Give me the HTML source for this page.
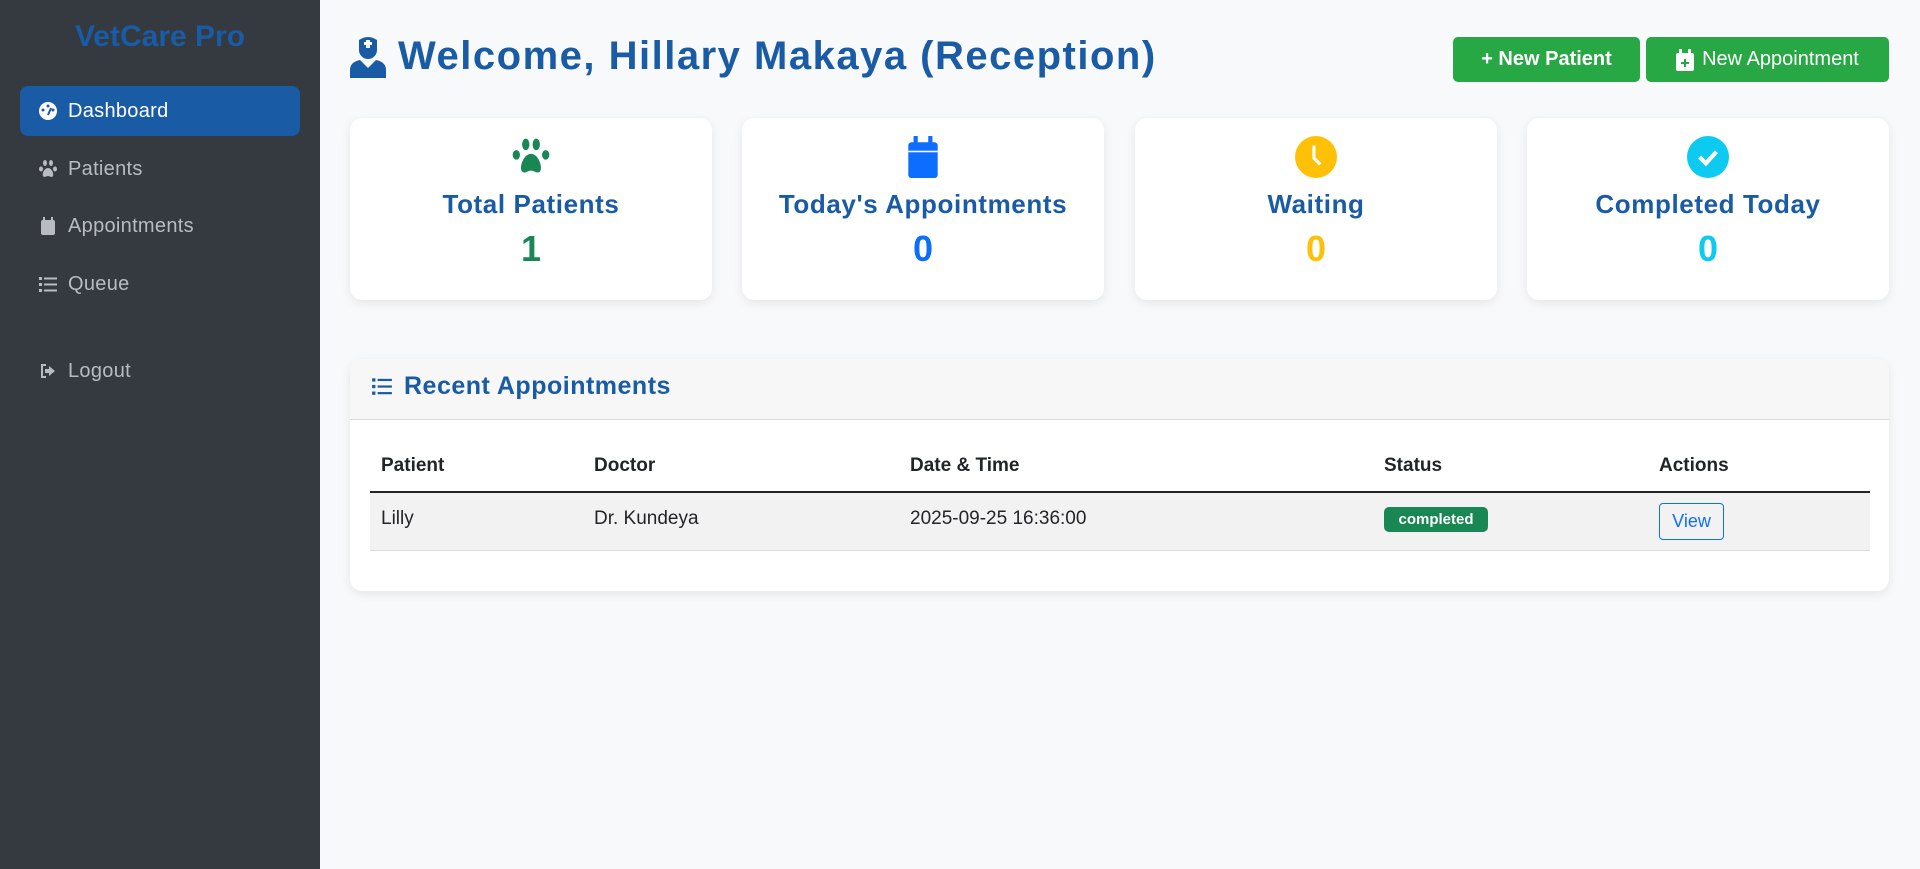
<!DOCTYPE html>
<html><head><meta charset="utf-8"><style>
*{box-sizing:border-box;margin:0;padding:0}
body{width:1920px;height:869px;background:#f8f9fa;font-family:"Liberation Sans",sans-serif;position:relative;overflow:hidden}
.sb{position:absolute;left:0;top:0;width:320px;height:869px;background:#343a40}
.logo{position:absolute;top:20px;width:320px;text-align:center;color:#1a5ba6;font-weight:bold;font-size:30px}
.nav{position:absolute;left:20px;width:280px;height:50px;border-radius:8px;color:#b8bcc0;font-size:20px;display:flex;align-items:center;padding-left:18px;gap:10px;letter-spacing:.3px}
.nav.act{background:#1a5ba6;color:#fff}
.nav svg{width:20px;height:20px;fill:currentColor}
h1{position:absolute;left:350px;top:34px;font-size:40px;color:#1a5ba6;display:flex;align-items:center;gap:12px;letter-spacing:1.5px}
.btn{position:absolute;top:37px;height:45px;background:#28a745;color:#fff;border-radius:5px;font-size:20px;display:flex;align-items:center;justify-content:center;gap:8px}
.card{position:absolute;top:118px;width:362px;height:182px;background:#fff;border-radius:12px;box-shadow:0 3px 10px rgba(0,0,0,.08);text-align:center}
.card svg{position:absolute;left:160px;top:18px;width:42px;height:42px}
.card .t{position:absolute;top:71px;width:100%;font-size:26px;font-weight:bold;color:#1a5ba6;letter-spacing:.6px}
.card .n{position:absolute;top:110px;width:100%;font-size:36px;font-weight:bold}
.panel{position:absolute;left:350px;top:359px;width:1539px;height:232px;background:#fff;border-radius:12px;box-shadow:0 3px 10px rgba(0,0,0,.08);overflow:hidden}
.ph{height:61px;background:#f7f7f7;border-bottom:1px solid #dcdcdc;display:flex;align-items:center;padding-left:20px;gap:10px;font-size:25px;font-weight:bold;color:#1a5ba6;padding-bottom:6px;letter-spacing:.5px}
.th,.td{position:absolute;font-size:19px;color:#212529}
.th{font-weight:bold;top:96px}
.td{top:149px}
</style></head><body>
<div class="sb">
<div class="logo">VetCare Pro</div>
<div class="nav act" style="top:86px"><svg viewBox="0 0 20 20"><circle cx="10" cy="10" r="9"/><circle cx="10" cy="5" r="1.5" fill="#1a5ba6"/><circle cx="5" cy="9" r="1.5" fill="#1a5ba6"/><circle cx="15" cy="9" r="1.5" fill="#1a5ba6"/><path d="M10 14L13 7" stroke="#1a5ba6" stroke-width="2"/></svg>Dashboard</div>
<div class="nav" style="top:144px"><svg viewBox="0 0 20 20"><ellipse cx="7" cy="4" rx="2" ry="3"/><ellipse cx="13" cy="4" rx="2" ry="3"/><ellipse cx="3" cy="10" rx="2" ry="2.5"/><ellipse cx="17" cy="10" rx="2" ry="2.5"/><path d="M10 9c-4 0-6 6-5 8s4 0 5 0 4 2 5 0-1-8-5-8z"/></svg>Patients</div>
<div class="nav" style="top:201px"><svg viewBox="0 0 20 20"><rect x="3" y="4" width="14" height="15" rx="2"/><rect x="5" y="1" width="2" height="4"/><rect x="13" y="1" width="2" height="4"/></svg>Appointments</div>
<div class="nav" style="top:259px"><svg viewBox="0 0 20 20"><rect x="1" y="3" width="3" height="3"/><rect x="6" y="3.5" width="13" height="2"/><rect x="1" y="9" width="3" height="3"/><rect x="6" y="9.5" width="13" height="2"/><rect x="1" y="15" width="3" height="3"/><rect x="6" y="15.5" width="13" height="2"/></svg>Queue</div>
<div class="nav" style="top:346px"><svg viewBox="0 0 20 20"><path d="M8 3H3v14h5v-2H5V5h3z"/><path d="M11 5l6 5-6 5v-3H7V8h4z"/></svg>Logout</div>
</div>
<h1><svg width="36" height="42" viewBox="0 0 36 42" fill="#1a5ba6"><path d="M9 4q9-6 18 0v10a9 9 0 0 1-18 0z"/><rect x="16" y="4" width="4" height="8" fill="#fff"/><rect x="14" y="6" width="8" height="3" fill="#fff"/><path d="M0 42v-8q0-8 10-10l8 8 8-8q10 2 10 10v8z"/></svg>Welcome, Hillary Makaya (Reception)</h1>
<div class="btn" style="left:1453px;width:187px;font-weight:bold">+ New Patient</div>
<div class="btn" style="left:1646px;width:243px"><svg width="18" height="22" viewBox="0 0 18 22" fill="#fff"><rect x="0" y="4" width="18" height="18" rx="2"/><rect x="3" y="0" width="3" height="5"/><rect x="12" y="0" width="3" height="5"/><path d="M8 10h2v3h3v2h-3v3H8v-3H5v-2h3z" fill="#28a745"/></svg>New Appointment</div>
<div class="card" style="left:350px"><svg viewBox="0 0 40 40" fill="#198754"><ellipse cx="15" cy="8" rx="3.5" ry="5.5"/><ellipse cx="25" cy="8" rx="3.5" ry="5.5"/><ellipse cx="6" cy="18" rx="3.5" ry="4.5"/><ellipse cx="34" cy="18" rx="3.5" ry="4.5"/><path d="M20 17c-7 0-11 12-9 16s6 0 9 0 7 4 9 0-2-16-9-16z"/></svg><div class="t">Total Patients</div><div class="n" style="color:#198754">1</div></div>
<div class="card" style="left:742px"><svg viewBox="0 0 40 40" fill="#0d6efd"><rect x="6" y="6" width="28" height="34" rx="3"/><rect x="11" y="0" width="4" height="8"/><rect x="25" y="0" width="4" height="8"/><rect x="6" y="14" width="28" height="1.5" fill="#fff"/></svg><div class="t">Today's Appointments</div><div class="n" style="color:#0d6efd">0</div></div>
<div class="card" style="left:1135px"><svg viewBox="0 0 40 40"><circle cx="20" cy="20" r="20" fill="#ffc107"/><path d="M18 9v12l6 6" stroke="#fff" stroke-width="3" fill="none"/></svg><div class="t">Waiting</div><div class="n" style="color:#ffc107">0</div></div>
<div class="card" style="left:1527px"><svg viewBox="0 0 40 40"><circle cx="20" cy="20" r="20" fill="#0dcaf0"/><path d="M12 20l6 6 10-11" stroke="#fff" stroke-width="4" fill="none"/></svg><div class="t">Completed Today</div><div class="n" style="color:#0dcaf0">0</div></div>
<div class="panel">
<div class="ph"><svg width="24" height="22" viewBox="0 0 20 20" fill="#1a5ba6"><rect x="1" y="3" width="3" height="3"/><rect x="6" y="3.5" width="13" height="2"/><rect x="1" y="9" width="3" height="3"/><rect x="6" y="9.5" width="13" height="2"/><rect x="1" y="15" width="3" height="3"/><rect x="6" y="15.5" width="13" height="2"/></svg>Recent Appointments</div>
<div class="th" style="left:31px">Patient</div><div class="th" style="left:244px">Doctor</div><div class="th" style="left:560px">Date &amp; Time</div><div class="th" style="left:1034px">Status</div><div class="th" style="left:1309px">Actions</div>
<div style="position:absolute;left:20px;top:132px;width:1500px;height:2px;background:#212529"></div>
<div style="position:absolute;left:20px;top:134px;width:1500px;height:58px;background:#f2f2f2;border-bottom:1px solid #dcdcdc"></div>
<div class="td" style="left:31px">Lilly</div><div class="td" style="left:244px">Dr. Kundeya</div><div class="td" style="left:560px">2025-09-25 16:36:00</div>
<div style="position:absolute;left:1034px;top:148px;width:104px;height:25px;background:#198754;border-radius:5px;color:#fff;font-size:15px;font-weight:bold;text-align:center;line-height:25px">completed</div>
<div style="position:absolute;left:1309px;top:144px;width:65px;height:37px;border:1px solid #0d6efd;border-radius:4px;color:#0d6efd;font-size:18px;text-align:center;line-height:35px">View</div>
</div>
</body></html>
